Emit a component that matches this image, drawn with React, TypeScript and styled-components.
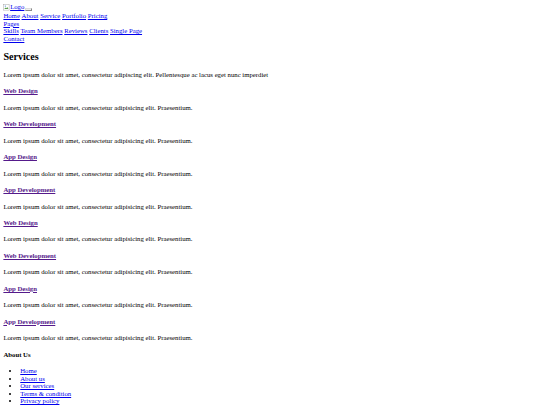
import styled, { createGlobalStyle } from "styled-components";

const GlobalStyle = createGlobalStyle`
  html {
    zoom: 0.421875;
  }
  body {
    margin: 8px;
    font-family: "Liberation Serif", "Times New Roman", serif;
    font-size: 16px;
    line-height: 17.8px;
    color: #000;
    background: #fff;
  }
`;

const navTop = ["Home", "About", "Service", "Portfolio", "Pricing"];
const navPages = ["Skills", "Team Members", "Reviews", "Clients", "Single Page"];
const services = [
  "Web Design",
  "Web Development",
  "App Design",
  "App Development",
  "Web Design",
  "Web Development",
  "App Design",
  "App Development",
];
const footerLinks = ["Home", "About us", "Our services", "Terms & condition", "Privacy policy"];

export default function App() {
  return (
    <>
      <GlobalStyle />
      <Header>
        <Brand>
          <Logo>
            <svg width="16" height="16" viewBox="0 0 16 16">
              <rect x="1.5" y="1.5" width="13" height="13" fill="#fff" stroke="#9a9a9a" />
              <path d="M3 12 L6 8 L8 10 L10 7 L13 12 Z" fill="#5c9e4c" />
              <circle cx="5.5" cy="5" r="1.5" fill="#4a8ad0" />
            </svg>
            Logo
          </Logo>
          <Toggle aria-label="menu" />
        </Brand>
        <Nav>
          <NavRow>
            {navTop.map((n) => (
              <NavLink key={n} href="#">
                {n}
              </NavLink>
            ))}
          </NavRow>
          <NavRow>
            <NavLink href="#">Pages</NavLink>
          </NavRow>
          <NavRow>
            {navPages.map((n) => (
              <NavLink key={n} href="#">
                {n}
              </NavLink>
            ))}
          </NavRow>
          <NavRow>
            <NavLink href="#">Contact</NavLink>
          </NavRow>
        </Nav>
      </Header>

      <section>
        <Title>Services</Title>
        <Text>
          Lorem ipsum dolor sit amet, consectetur adipiscing elit. Pellentesque ac lacus eget nunc
          imperdiet
        </Text>
        {services.map((s, i) => (
          <div key={i}>
            <ItemTitle>
              <VisitedLink href="#">{s}</VisitedLink>
            </ItemTitle>
            <Text>Lorem ipsum dolor sit amet, consectetur adipisicing elit. Praesentium.</Text>
          </div>
        ))}
      </section>

      <footer>
        <ItemTitle>About Us</ItemTitle>
        <List>
          {footerLinks.map((f) => (
            <li key={f}>
              <NavLink href="#">{f}</NavLink>
            </li>
          ))}
        </List>
      </footer>
    </>
  );
}

const Header = styled.header`
  display: block;
`;

const Brand = styled.div`
  display: block;
`;

const Logo = styled.span`
  display: inline-flex;
  align-items: flex-end;
  color: #0000ee;
  text-decoration: underline;
`;

const Toggle = styled.button`
  width: 16px;
  height: 6px;
  padding: 0;
  margin-left: 2px;
  border: 2px outset #ddd;
  background: #efefef;
  vertical-align: middle;
`;

const Nav = styled.nav`
  display: block;
`;

const NavRow = styled.div`
  display: block;
`;

const NavLink = styled.a`
  color: #0000ee;
  text-decoration: underline;
  margin-right: 4px;
  &:last-child {
    margin-right: 0;
  }
`;

const VisitedLink = styled.a`
  color: #551a8b;
  text-decoration: underline;
`;

const Title = styled.h2`
  font-size: 24px;
  line-height: 27px;
  font-weight: bold;
  margin: 19.92px 0;
`;

const ItemTitle = styled.h4`
  font-size: 16px;
  font-weight: bold;
  margin: 21.28px 0;
`;

const Text = styled.p`
  margin: 16px 0;
`;

const List = styled.ul`
  margin: 16px 0;
  padding-left: 40px;
  list-style: disc;
`;
